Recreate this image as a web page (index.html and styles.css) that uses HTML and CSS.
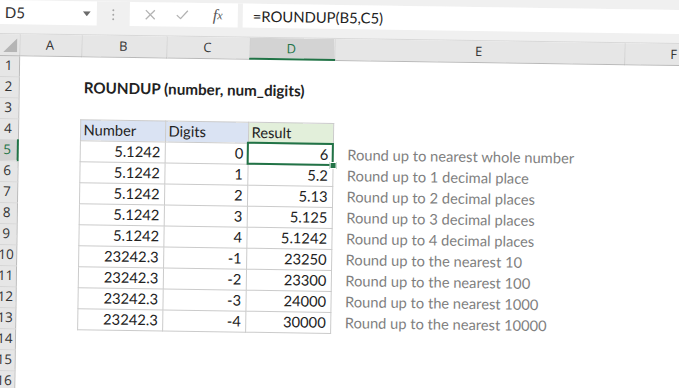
FILE: index.html
```html
<!DOCTYPE html>
<html>
<head>
  <title>ROUNDUP example</title>
  <link rel="stylesheet" href="styles.css">
</head>
<body>
  <div class="window">
    <div class="toolbar">
      <div class="namebox">
        <span>D5</span>
        <svg width="8" height="5" viewBox="0 0 8 5"><path d="M0 0h8L4 5z" fill="#6b6b6b"/></svg>
      </div>
      <div class="grip">
        <svg width="3" height="12" viewBox="0 0 3 12"><circle cx="1.5" cy="1.5" r="1" fill="#a5a5a5"/><circle cx="1.5" cy="6" r="1" fill="#a5a5a5"/><circle cx="1.5" cy="10.5" r="1" fill="#a5a5a5"/></svg>
      </div>
      <div class="buttons">
        <span class="btn">
          <svg width="11" height="11" viewBox="0 0 11 11"><path d="M1 1l9 9M10 1l-9 9" stroke="#b3b3b3" stroke-width="1.3" fill="none"/></svg>
        </span>
        <span class="btn">
          <svg width="13" height="10" viewBox="0 0 13 10"><path d="M1 5.5l3.8 3.5L12 1" stroke="#b3b3b3" stroke-width="1.3" fill="none"/></svg>
        </span>
        <span class="btn fx">f<sub>x</sub></span>
      </div>
      <div class="formula">=ROUNDUP(B5,C5)</div>
    </div>

    <table class="sheet">
      <colgroup>
        <col style="width: 20px">
        <col style="width: 62px">
        <col style="width: 85px">
        <col style="width: 83px">
        <col style="width: 85px">
        <col style="width: 290px">
        <col style="width: 100px">
      </colgroup>
      <thead>
        <tr>
          <th class="corner">
            <svg width="14" height="14" viewBox="0 0 14 14"><path d="M14 0v14H0z" fill="#b5b5b5"/></svg>
          </th>
          <th>A</th>
          <th>B</th>
          <th>C</th>
          <th class="cur">D</th>
          <th>E</th>
          <th>F</th>
        </tr>
      </thead>
      <tbody>
        <tr><th class="rh">1</th><td></td><td></td><td></td><td></td><td></td><td></td></tr>
        <tr><th class="rh">2</th><td></td><td class="title" colspan="3">ROUNDUP (number, num_digits)</td><td></td><td></td></tr>
        <tr><th class="rh">3</th><td></td><td></td><td></td><td></td><td></td><td></td></tr>
        <tr>
          <th class="rh">4</th><td></td>
          <td class="t hb">Number</td><td class="t hb">Digits</td><td class="t hg">Result</td>
          <td></td><td></td>
        </tr>
        <tr>
          <th class="rh cur">5</th><td></td>
          <td class="t num">5.1242</td><td class="t num">0</td><td class="t num active">6</td>
          <td class="desc">Round up to nearest whole number</td><td></td>
        </tr>
        <tr>
          <th class="rh">6</th><td></td>
          <td class="t num">5.1242</td><td class="t num">1</td><td class="t num">5.2</td>
          <td class="desc">Round up to 1 decimal place</td><td></td>
        </tr>
        <tr>
          <th class="rh">7</th><td></td>
          <td class="t num">5.1242</td><td class="t num">2</td><td class="t num">5.13</td>
          <td class="desc">Round up to 2 decimal places</td><td></td>
        </tr>
        <tr>
          <th class="rh">8</th><td></td>
          <td class="t num">5.1242</td><td class="t num">3</td><td class="t num">5.125</td>
          <td class="desc">Round up to 3 decimal places</td><td></td>
        </tr>
        <tr>
          <th class="rh">9</th><td></td>
          <td class="t num">5.1242</td><td class="t num">4</td><td class="t num">5.1242</td>
          <td class="desc">Round up to 4 decimal places</td><td></td>
        </tr>
        <tr>
          <th class="rh">10</th><td></td>
          <td class="t num">23242.3</td><td class="t num">-1</td><td class="t num">23250</td>
          <td class="desc">Round up to the nearest 10</td><td></td>
        </tr>
        <tr>
          <th class="rh">11</th><td></td>
          <td class="t num">23242.3</td><td class="t num">-2</td><td class="t num">23300</td>
          <td class="desc">Round up to the nearest 100</td><td></td>
        </tr>
        <tr>
          <th class="rh">12</th><td></td>
          <td class="t num">23242.3</td><td class="t num">-3</td><td class="t num">24000</td>
          <td class="desc">Round up to the nearest 1000</td><td></td>
        </tr>
        <tr>
          <th class="rh">13</th><td></td>
          <td class="t num">23242.3</td><td class="t num">-4</td><td class="t num">30000</td>
          <td class="desc">Round up to the nearest 10000</td><td></td>
        </tr>
        <tr><th class="rh">14</th><td></td><td></td><td></td><td></td><td></td><td></td></tr>
        <tr><th class="rh">15</th><td></td><td></td><td></td><td></td><td></td><td></td></tr>
        <tr><th class="rh">16</th><td></td><td></td><td></td><td></td><td></td><td></td></tr>
        <tr><th class="rh">17</th><td></td><td></td><td></td><td></td><td></td><td></td></tr>
      </tbody>
    </table>
  </div>
</body>
</html>
```

FILE: styles.css
```css
body {
  margin: 0;
  overflow: hidden;
  background: #f0f0f0;
  font-family: "Open Sans", sans-serif;
  color: #444;
}
.window {
  width: 725px;
  background: #fff;
  transform: rotate(0.85deg);
  transform-origin: 0 0;
}

/* formula bar */
.toolbar {
  display: flex;
  align-items: flex-start;
  height: 33px;
  background: #f0f0f0;
  border-bottom: 1px solid #d8d8d8;
}
.namebox {
  display: flex;
  align-items: center;
  justify-content: space-between;
  width: 97px;
  height: 24px;
  padding: 0 6px 0 5px;
  box-sizing: border-box;
  background: #fff;
  font-family: Lato, sans-serif;
  font-size: 15px;
  color: #333;
}
.grip {
  display: flex;
  justify-content: center;
  width: 33px;
  padding-top: 7px;
}
.buttons {
  display: flex;
  align-items: center;
  width: 108px;
  height: 24px;
  padding-left: 4px;
  box-sizing: border-box;
  background: #fff;
  margin-right: 5px;
}
.btn {
  display: flex;
  justify-content: center;
  align-items: center;
  width: 32px;
}
.fx {
  width: 40px;
  font-family: "Liberation Serif", serif;
  font-style: italic;
  font-size: 16px;
  color: #555;
}
.fx sub {
  font-size: 12px;
  vertical-align: -1px;
}
.formula {
  flex: 1;
  height: 24px;
  line-height: 24px;
  padding-left: 10px;
  background: #fff;
  font-family: Lato, sans-serif;
  font-size: 14.8px;
  color: #222;
}

/* grid */
.sheet {
  border-collapse: collapse;
  table-layout: fixed;
  width: 725px;
  font-family: Lato, sans-serif;
  font-size: 14.7px;
  color: #222;
}
.sheet tr {
  height: 21px;
}
.sheet th,
.sheet td {
  padding: 0 4px 0 3px;
  line-height: 19px;
  white-space: nowrap;
  overflow: hidden;
}
.sheet thead th {
  background: #e6e6e6;
  border-right: 1px solid #cfcfcf;
  border-bottom: 1px solid #b9b9b9;
  font-family: "Open Sans", sans-serif;
  font-weight: normal;
  font-size: 13px;
  color: #333;
}
.sheet thead th.corner {
  padding: 0;
  text-align: right;
  vertical-align: bottom;
  line-height: 0;
}
.corner svg {
  margin: 0 2px 3px 0;
}
.sheet thead th.cur {
  background: #d3d3d3;
  color: #217346;
  border-bottom: 2px solid #217346;
}
.sheet th.rh {
  padding: 0;
  background: #e6e6e6;
  border-right: 1px solid #b9b9b9;
  border-bottom: 1px solid #d6d6d6;
  font-family: "Open Sans", sans-serif;
  font-weight: normal;
  font-size: 13.5px;
  color: #333;
  text-align: center;
}
.sheet th.rh.cur {
  background: #d3d3d3;
  color: #217346;
  border-right: 2px solid #217346;
}
.sheet td.title {
  font-size: 15.2px;
  font-weight: bold;
  overflow: visible;
}
.t {
  border: 1px solid #cbcbcb;
}
.num {
  text-align: right;
}
.hb {
  background: #dae3f3;
}
.hg {
  background: #e2efda;
}
.active {
  position: relative;
  outline: 2px solid #217346;
  outline-offset: -1px;
}
.active::after {
  content: "";
  position: absolute;
  right: -4px;
  bottom: -4px;
  width: 5px;
  height: 5px;
  background: #217346;
  border: 1px solid #fff;
}
.sheet td.active {
  overflow: visible;
}
.sheet td.desc {
  padding-left: 14px;
  color: #7f7f7f;
}
```
